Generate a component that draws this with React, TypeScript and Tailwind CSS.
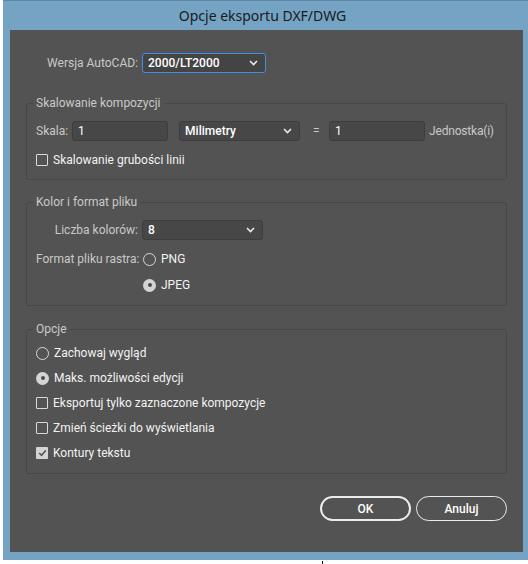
import React from 'react'

const font = { fontFamily: 'Roboto, "Liberation Sans", sans-serif' }

function Chevron() {
    return (
        <svg width="9" height="6" viewBox="0 0 9 6" className="shrink-0">
            <polyline points="1,1 4.5,4.5 8,1" fill="none" stroke="#e8e8e8" strokeWidth="1.6" />
        </svg>
    )
}

function Select({ value, width, focused }: { value: string; width: string; focused?: boolean }) {
    return (
        <div
            className={`flex h-[20px] items-center justify-between rounded-[3px] border pl-[5px] pr-[7px] ${width} ${
                focused ? 'border-[#3f8fe6] bg-[#444444]' : 'border-[#3d3d3d] bg-[#474747]'
            }`}
        >
            <span className="text-[12px] font-medium text-white">{value}</span>
            <Chevron />
        </div>
    )
}

function Input({ value }: { value: string }) {
    return (
        <div className="flex h-[20px] w-[96px] items-center rounded-[3px] border border-[#3d3d3d] bg-[#474747] pl-[5px]">
            <span className="text-[12px] text-white">{value}</span>
        </div>
    )
}

function Radio({ checked }: { checked?: boolean }) {
    return checked ? (
        <span className="flex h-[13px] w-[13px] shrink-0 items-center justify-center rounded-full bg-[#d4d4d4]">
            <span className="h-[4px] w-[4px] rounded-full bg-[#4b4b4b]" />
        </span>
    ) : (
        <span className="h-[13px] w-[13px] shrink-0 rounded-full border border-[#d8d8d8]" />
    )
}

function Checkbox({ checked }: { checked?: boolean }) {
    return checked ? (
        <span className="flex h-[12px] w-[12px] shrink-0 items-center justify-center rounded-[1px] bg-[#d4d4d4]">
            <svg width="9" height="8" viewBox="0 0 9 8">
                <polyline points="1.2,4 3.5,6.3 7.8,1.5" fill="none" stroke="#555555" strokeWidth="1.6" />
            </svg>
        </span>
    ) : (
        <span className="h-[12px] w-[12px] shrink-0 rounded-[1px] border border-[#d8d8d8]" />
    )
}

function Option({ control, label }: { control: React.ReactNode; label: string }) {
    return (
        <div className="flex h-[16px] items-center gap-[5px]">
            {control}
            <span className="whitespace-nowrap text-[12px] text-[#f2f2f2]">{label}</span>
        </div>
    )
}

function Group({ title, children, className }: { title: string; children: React.ReactNode; className: string }) {
    return (
        <fieldset className={`rounded-[3px] border border-[#474747] pl-[9px] ${className}`}>
            <legend className="-ml-[3px] px-[3px] text-[12px] leading-[16px] text-[#c9c9c9]">{title}</legend>
            {children}
        </fieldset>
    )
}

export default function App() {
    return (
        <div className="h-[564px] w-[528px] overflow-hidden bg-white" style={font}>
            <div className="ml-[3px] flex h-[560px] w-[525px] flex-col border-t border-[#5c87a6] bg-[#74a3c4]">
                {/* Title bar */}
                <div className="flex h-[29px] items-center justify-center pr-[6px]">
                    <span className="text-[14px] text-[#1b1b1b]" style={{ fontFamily: '"Noto Sans", "Open Sans", sans-serif' }}>
                        Opcje eksportu DXF/DWG
                    </span>
                </div>

                <div className="ml-[7px] flex h-[522px] w-[513px] flex-col bg-[#535353] px-[16px] pt-[23px] text-[12px] text-[#c9c9c9]">
                    {/* AutoCAD version */}
                    <div className="flex items-center">
                        <span className="w-[116px] whitespace-nowrap pr-[4px] text-right">Wersja AutoCAD:</span>
                        <Select value="2000/LT2000" width="w-[124px]" focused />
                    </div>

                    <Group title="Skalowanie kompozycji" className="mt-[22px] pb-[11px]">
                        <div className="mt-[10px] flex items-center">
                            <span className="pr-[4px]">Skala:</span>
                            <Input value="1" />
                            <div className="ml-[11px]">
                                <Select value="Milimetry" width="w-[121px]" />
                            </div>
                            <span className="ml-[13px] w-[16px]">=</span>
                            <Input value="1" />
                            <span className="ml-[4px] whitespace-nowrap tracking-[-0.2px]">Jednostka(i)</span>
                        </div>
                        <div className="mt-[11px]">
                            <Option control={<Checkbox />} label="Skalowanie grubości linii" />
                        </div>
                    </Group>

                    <Group title="Kolor i format pliku" className="mt-[14px] pb-[12px]">
                        <div className="mt-[10px] flex items-center">
                            <span className="w-[106px] whitespace-nowrap pr-[4px] text-right">Liczba kolorów:</span>
                            <Select value="8" width="w-[121px]" />
                        </div>
                        <div className="mt-[10px] flex items-center">
                            <span className="w-[107px] whitespace-nowrap pr-[4px] text-right">Format pliku rastra:</span>
                            <Option control={<Radio />} label="PNG" />
                        </div>
                        <div className="mt-[9px] pl-[107px]">
                            <Option control={<Radio checked />} label="JPEG" />
                        </div>
                    </Group>

                    <Group title="Opcje" className="mt-[15px] pb-[12px]">
                        <div className="mt-[8px] flex flex-col gap-[9px]">
                            <Option control={<Radio />} label="Zachowaj wygląd" />
                            <Option control={<Radio checked />} label="Maks. możliwości edycji" />
                            <Option control={<Checkbox />} label="Eksportuj tylko zaznaczone kompozycje" />
                            <Option control={<Checkbox />} label="Zmień ścieżki do wyświetlania" />
                            <Option control={<Checkbox checked />} label="Kontury tekstu" />
                        </div>
                    </Group>

                    <div className="mt-[22px] flex justify-end gap-[5px]">
                        <button className="flex h-[25px] w-[91px] items-center justify-center rounded-full border-2 border-[#ececec] text-[12px] font-medium text-white">
                            OK
                        </button>
                        <button className="flex h-[25px] w-[91px] items-center justify-center rounded-full border border-[#ececec] text-[12px] font-medium text-white">
                            Anuluj
                        </button>
                    </div>
                </div>
            </div>
            <div className="ml-[322px] mt-px h-[3px] w-px bg-black" />
        </div>
    )
}
